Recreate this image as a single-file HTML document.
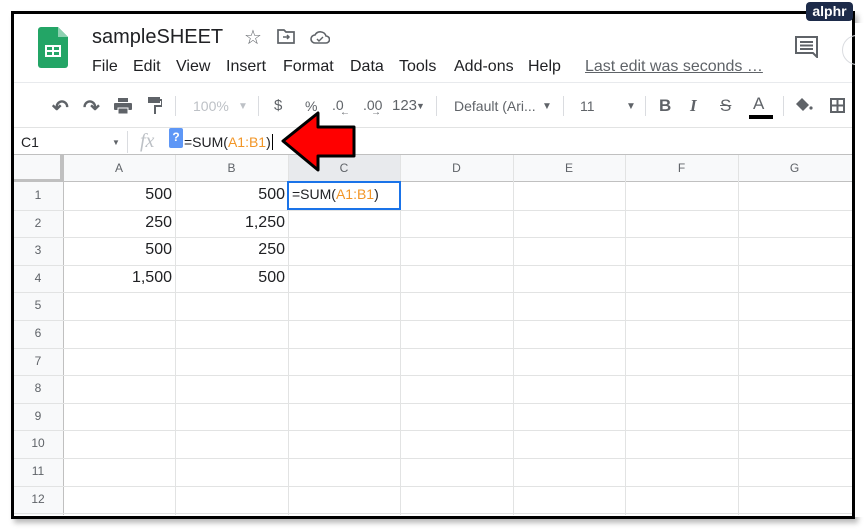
<!DOCTYPE html>
<html><head><meta charset="utf-8"><style>
*{margin:0;padding:0;box-sizing:border-box}
body{width:865px;height:529px;background:#fff;position:relative;overflow:hidden;font-family:"Liberation Sans",Arial,sans-serif;color:#202124}
.a{position:absolute;white-space:nowrap}
#frame{position:absolute;left:11px;top:11px;width:844px;height:508px;border:3px solid #000;box-shadow:3px 4px 5px #bbb;background:#fff;overflow:hidden}
.menu{font-size:16px;top:58px;color:#202124}
.tb{color:#5f6368;font-size:14px}
.sep{position:absolute;width:1px;background:#dadce0}
.hl{position:absolute;height:1px;background:#e2e3e3}
.vl{position:absolute;width:1px;background:#e2e3e3}
.rn{position:absolute;left:13px;width:50px;text-align:center;font-size:12px;color:#5f6368}
.ch{position:absolute;top:155px;height:27px;line-height:27px;text-align:center;font-size:12px;color:#5f6368}
.num{position:absolute;text-align:right;font-size:16px;color:#202124}
.or{color:#f29627}
</style></head><body>
<div id="frame"></div>
<svg class="a" style="left:38px;top:27px" width="30" height="41" viewBox="0 0 30 41"><path d="M3 0H20L30 10V38a3 3 0 0 1-3 3H3a3 3 0 0 1-3-3V3a3 3 0 0 1 3-3z" fill="#23a566"/><path d="M20 0V10H30z" fill="#8ed1b1"/><rect x="7" y="18" width="16" height="12" fill="#fff"/><rect x="9" y="20" width="5" height="3" fill="#23a566"/><rect x="16" y="20" width="5" height="3" fill="#23a566"/><rect x="9" y="25" width="5" height="3" fill="#23a566"/><rect x="16" y="25" width="5" height="3" fill="#23a566"/></svg>
<div class="a" style="left:92px;top:26px;font-size:20px">sampleSHEET</div>
<div class="a" style="left:244px;top:25px;font-size:20px;color:#5f6368">☆</div>
<svg class="a" style="left:277px;top:29px" width="18" height="15" viewBox="0 0 18 15"><path d="M1 1h6l2 2h8v11H1z" fill="none" stroke="#5f6368" stroke-width="1.7"/><path d="M6 8h6M10 6l2 2-2 2" fill="none" stroke="#5f6368" stroke-width="1.5"/></svg>
<svg class="a" style="left:310px;top:30px" width="20" height="14" viewBox="0 0 20 14"><path d="M5 13a4 4 0 0 1 0-8 6 6 0 0 1 11 1 3.5 3.5 0 0 1 0 7z" fill="none" stroke="#5f6368" stroke-width="1.6"/><path d="M7 9l2 2 4-4" fill="none" stroke="#5f6368" stroke-width="1.4"/></svg>
<div class="a menu" style="left:92px">File</div>
<div class="a menu" style="left:133px">Edit</div>
<div class="a menu" style="left:176px">View</div>
<div class="a menu" style="left:226px">Insert</div>
<div class="a menu" style="left:283px">Format</div>
<div class="a menu" style="left:350px">Data</div>
<div class="a menu" style="left:399px">Tools</div>
<div class="a menu" style="left:454px">Add-ons</div>
<div class="a menu" style="left:528px">Help</div>
<div class="a menu" style="left:585px;color:#5f6368;text-decoration:underline">Last edit was seconds …</div>
<svg class="a" style="left:795px;top:36px" width="23" height="22" viewBox="0 0 23 22"><path d="M1 1h21v20l-4-4H1z" fill="none" stroke="#5f6368" stroke-width="2"/><path d="M5 6h13M5 9.5h13M5 13h13" stroke="#5f6368" stroke-width="2"/></svg>
<div class="a" style="left:842px;top:35px;width:30px;height:30px;border:1px solid #dadce0;border-radius:50%"></div>
<div class="hl" style="left:14px;top:82px;width:838px;background:#e8eaed"></div>
<div class="a tb" style="left:52px;top:95px;font-size:20px;font-weight:bold">↶</div>
<div class="a tb" style="left:83px;top:95px;font-size:20px;font-weight:bold">↷</div>
<svg class="a" style="left:114px;top:98px" width="18" height="16" viewBox="0 0 18 16"><rect x="4" y="0" width="10" height="4" fill="#5f6368"/><rect x="0" y="5" width="18" height="7" rx="1" fill="#5f6368"/><rect x="4" y="10" width="10" height="6" fill="#5f6368" stroke="#fff" stroke-width="1"/></svg>
<svg class="a" style="left:148px;top:97px" width="14" height="17" viewBox="0 0 14 17"><rect x="0" y="0" width="12" height="6" fill="#5f6368"/><path d="M12 3h2v6H7v8" fill="none" stroke="#5f6368" stroke-width="2"/></svg>
<div class="sep" style="left:175px;top:96px;height:20px"></div>
<div class="a tb" style="left:193px;top:98px;color:#bdc1c6">100%</div>
<div class="a tb" style="left:238px;top:101px;color:#bdc1c6;font-size:10px">▼</div>
<div class="sep" style="left:258px;top:96px;height:20px"></div>
<div class="a tb" style="left:274px;top:97px;font-size:15px">$</div>
<div class="a tb" style="left:305px;top:98px">%</div>
<div class="a tb" style="left:332px;top:97px;font-size:14px">.0</div>
<div class="a tb" style="left:340px;top:107px;font-size:10px">←</div>
<div class="a tb" style="left:363px;top:97px;font-size:14px">.00</div>
<div class="a tb" style="left:371px;top:107px;font-size:10px">→</div>
<div class="a tb" style="left:392px;top:97px;font-size:15px">123</div>
<div class="a tb" style="left:416px;top:101px;font-size:9px">▼</div>
<div class="sep" style="left:436px;top:96px;height:20px"></div>
<div class="a tb" style="left:454px;top:98px">Default (Ari...</div>
<div class="a tb" style="left:542px;top:101px;font-size:10px">▼</div>
<div class="sep" style="left:563px;top:96px;height:20px"></div>
<div class="a tb" style="left:580px;top:98px">11</div>
<div class="a tb" style="left:626px;top:101px;font-size:10px">▼</div>
<div class="sep" style="left:645px;top:96px;height:20px"></div>
<div class="a tb" style="left:659px;top:96px;font-size:17px;font-weight:bold">B</div>
<div class="a tb" style="left:690px;top:96px;font-size:17px;font-style:italic;font-family:'Liberation Serif',serif;font-weight:bold">I</div>
<div class="a tb" style="left:720px;top:96px;font-size:17px;text-decoration:line-through">S</div>
<div class="a tb" style="left:753px;top:94px;font-size:17px">A</div>
<div class="a" style="left:749px;top:115px;width:24px;height:4px;background:#000"></div>
<div class="sep" style="left:783px;top:96px;height:20px"></div>
<svg class="a" style="left:795px;top:97px" width="18" height="15" viewBox="0 0 18 15"><path d="M7 1l7 7-6 6-7-7z" fill="#5f6368"/><circle cx="16" cy="11" r="1.6" fill="#5f6368"/></svg>
<svg class="a" style="left:830px;top:98px" width="15" height="15" viewBox="0 0 15 15"><path d="M1 1h13v13H1zM7.5 1v13M1 7.5h13" fill="none" stroke="#5f6368" stroke-width="2"/></svg>
<div class="hl" style="left:14px;top:127px;width:838px;background:#e2e3e3"></div>
<div class="a" style="left:21px;top:134px;font-size:14px">C1</div>
<div class="a" style="left:112px;top:138px;font-size:8px;color:#5f6368">▼</div>
<div class="sep" style="left:127px;top:131px;height:22px"></div>
<div class="a" style="left:140px;top:130px;font-size:20px;font-style:italic;color:#bdc1c6;font-family:'Liberation Serif',serif">fx</div>
<div class="a" style="left:169px;top:128px;width:14px;height:20px;background:#5e97f6;border-radius:2px;color:#fff;font-size:12px;font-weight:bold;text-align:center;line-height:18px">?</div>
<div class="a" style="left:184px;top:134px;font-size:14px">=SUM(<span class="or">A1:B1</span>)<span style="border-left:1px solid #000;margin-left:1px"></span></div>
<div class="hl" style="left:14px;top:154px;width:838px;background:#c0c0c0"></div>
<div class="a" style="left:14px;top:155px;width:838px;height:27px;background:#f8f9fa"></div>
<div class="a" style="left:288px;top:155px;width:112px;height:27px;background:#e8eaed"></div>
<div class="a" style="left:14px;top:182px;width:49px;height:333px;background:#f8f9fa"></div>
<div class="a" style="left:60px;top:155px;width:3px;height:27px;background:#c0c0c0"></div>
<div class="a" style="left:14px;top:179px;width:49px;height:3px;background:#c0c0c0"></div>
<div class="ch" style="left:63px;width:112px">A</div>
<div class="ch" style="left:175px;width:113px">B</div>
<div class="ch" style="left:288px;width:112px">C</div>
<div class="ch" style="left:400px;width:113px">D</div>
<div class="ch" style="left:513px;width:112px">E</div>
<div class="ch" style="left:625px;width:113px">F</div>
<div class="ch" style="left:738px;width:113px">G</div>
<div class="hl" style="left:14px;top:181px;width:838px;background:#c0c0c0"></div>
<div id="grid"></div>
<script>
var g='';
var cols=[63,175,288,400,513,625,738];
for(var i=0;i<cols.length;i++){g+='<div class="vl" style="left:'+cols[i]+'px;top:155px;height:360px;'+(i==0?'background:#c0c0c0':'')+'"></div>';}
for(var r=1;r<=12;r++){var y=182+(r)*27.6;g+='<div class="hl" style="left:14px;top:'+Math.round(y)+'px;width:838px"></div>';
g+='<div class="rn" style="top:'+Math.round(y-27.6)+'px;line-height:27px">'+r+'</div>';}
var d=[['500','500'],['250','1,250'],['500','250'],['1,500','500']];
for(var r=0;r<4;r++){var y=Math.round(182+r*27.6)+4;
g+='<div class="num" style="left:63px;width:109px;top:'+y+'px">'+d[r][0]+'</div>';
g+='<div class="num" style="left:175px;width:110px;top:'+y+'px">'+d[r][1]+'</div>';}
document.getElementById('grid').innerHTML=g;
</script>
<div class="a" style="left:287px;top:181px;width:114px;height:29px;border:2px solid #1a73e8;background:#fff;font-size:14px;padding:3px 0 0 3px">=SUM(<span class="or">A1:B1</span>)</div>
<svg class="a" style="left:278px;top:110px" width="82" height="64" viewBox="0 0 82 64"><path d="M5 31L40 3V17H76V46H40V60z" fill="#f00" stroke="#000" stroke-width="3" stroke-linejoin="round"/></svg>
<div class="a" style="left:855px;top:23px;width:10px;height:494px;background:#fff"></div>
<div class="a" style="left:806px;top:2px;width:47px;height:19px;background:#1d2b4a;border-radius:4px;color:#fff;font-size:14px;font-weight:bold;text-align:center;line-height:19px">alphr</div>
</body></html>
